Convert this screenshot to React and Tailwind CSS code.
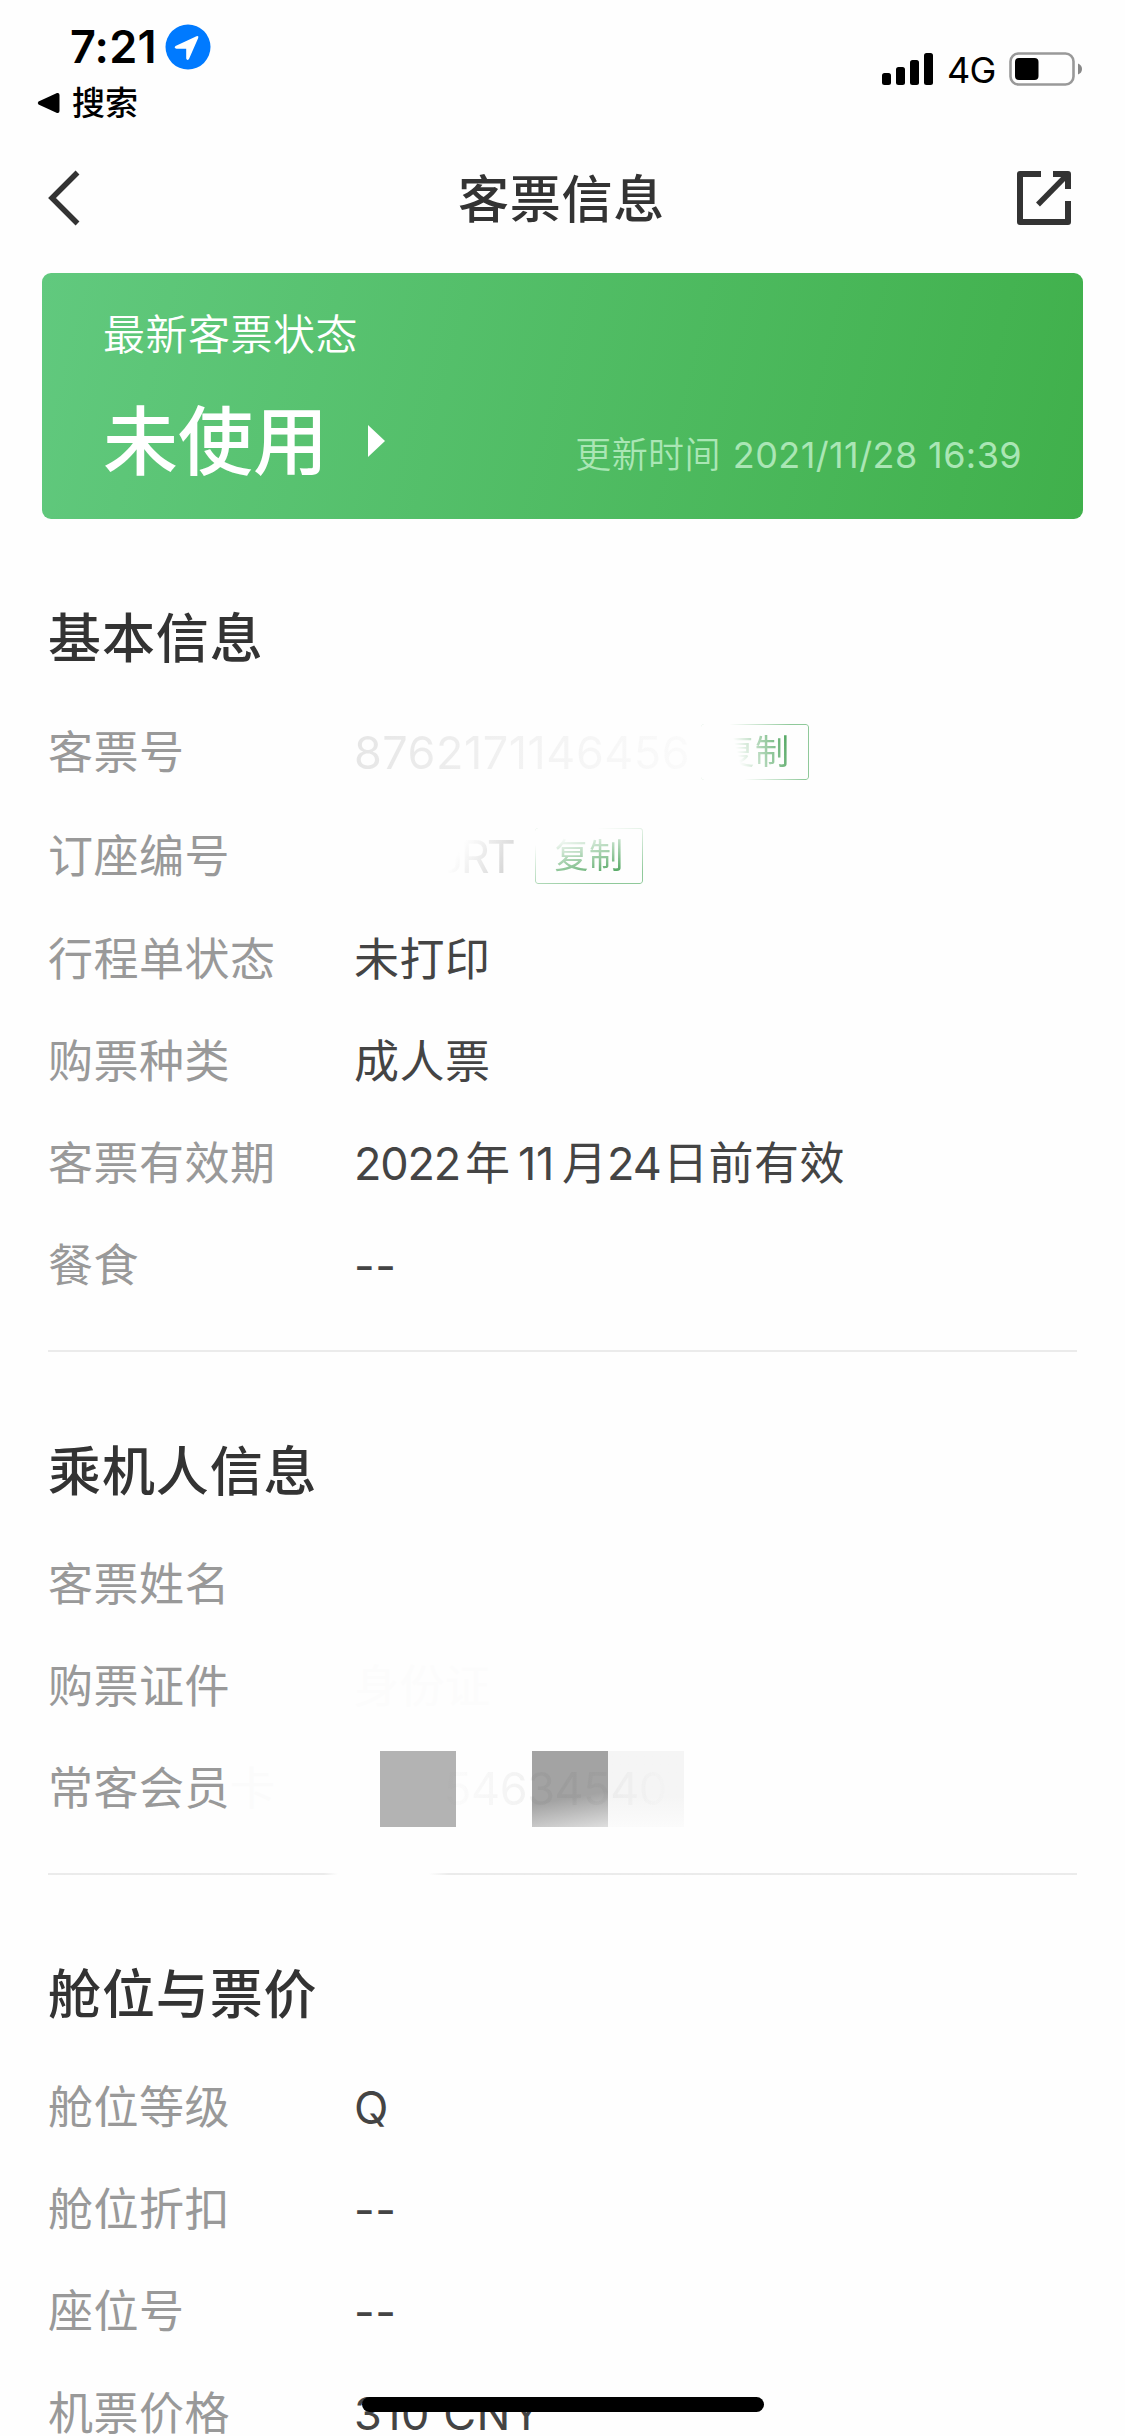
import clsx from "clsx";

const basicRows = [
  { label: "行程单状态", value: "未打印" },
  { label: "购票种类", value: "成人票" },
  { label: "客票有效期", value: <ValidDate /> },
  { label: "餐食", value: "--" },
];

const cabinRows = [
  { label: "舱位等级", value: "Q" },
  { label: "舱位折扣", value: "--" },
  { label: "座位号", value: "--" },
  { label: "机票价格", value: "310 CNY" },
];

function ValidDate() {
  return (
    <span className="flex">
      <span className="w-[111px] tracking-[-1.2px]">2022</span>
      <span className="w-[53px]">年</span>
      <span className="w-[44px] tracking-[-0.4px]">11</span>
      <span className="w-[45px]">月</span>
      <span className="w-[56px] tracking-[-1px]">24</span>
      <span className="tracking-[0.5px]">日前有效</span>
    </span>
  );
}

function StatusBar() {
  return (
    <div className="flex h-[132px] justify-between text-black">
      <div className="pl-[37px] pt-5">
        <div className="flex h-[54px] items-center pl-[33px]">
          <span className="w-[95px] text-[45px] font-semibold leading-[54px] tracking-[0.2px]">
            7:21
          </span>
          <svg viewBox="0 0 46 46" className="h-[46px] w-[46px]">
            <circle cx="23" cy="23" r="22.5" fill="#007aff" />
            <path
              d="M10.500 22 31.500 12.300Q34 11.500 33.200 14L24 35Q22 37 21.200 34.500V24.800H11.500Q8.500 24 10.500 22Z"
              fill="#fff"
            />
          </svg>
        </div>
        <div className="flex h-[57px] items-center">
          <svg viewBox="0 0 23 22" className="h-[22px] w-[23px]">
            <path d="M1.500 9.500 20 1Q22.500 0.500 22.500 3V19Q22.500 21.500 20 21L1.500 12.500Q0 11 1.500 9.500Z" />
          </svg>
          <span className="ml-3 pt-[2px] text-[33px] font-medium leading-none">搜索</span>
        </div>
      </div>
      <div className="flex h-[138px] items-center pr-[42px]">
        <svg viewBox="0 0 51 32" className="h-8 w-[51px]">
          <rect x="0" y="20" width="9" height="12" rx="2.500" />
          <rect x="14" y="14" width="9" height="18" rx="2.500" />
          <rect x="28" y="7" width="9" height="25" rx="2.500" />
          <rect x="42" y="0" width="9" height="32" rx="2.500" />
        </svg>
        <span className="ml-[14px] w-[48px] pt-[2px] text-[36px] leading-none tracking-[-0.8px]">
          4G
        </span>
        <svg viewBox="0 0 74 34" className="ml-[14px] h-[34px] w-[74px]">
          <rect x="1.500" y="1.500" width="63" height="31" rx="8" fill="none" stroke="#999" strokeWidth="2.600" />
          <rect x="6" y="6" width="23.500" height="22" rx="4" />
          <path d="M69 11.500Q73 13 73 17T69 22.500Z" fill="#888" />
        </svg>
      </div>
    </div>
  );
}

function NavBar() {
  return (
    <div className="flex h-[132px] items-center justify-between pl-[47px] pr-[53px] text-[#333]">
      <svg viewBox="0 0 34 56" className="h-14 w-[60px]" preserveAspectRatio="xMinYMid" fill="none">
        <path d="M30.500 2.500 5 28 30.500 53.500" stroke="currentColor" strokeWidth="5.500" />
      </svg>
      <h1 className="pt-1 text-[51px] font-medium tracking-[0.7px]">客票信息</h1>
      <svg viewBox="0 0 56 56" className="h-14 w-14" fill="none" stroke="currentColor" strokeWidth="6">
        <path d="M25 4H4V52H52V31" strokeLinejoin="round" />
        <path d="M37 4H52V19" strokeLinejoin="round" />
        <path d="M51 5 22 34.500" strokeWidth="5.500" />
      </svg>
    </div>
  );
}

function StatusCard() {
  return (
    <div className="mx-[42px] mt-[9px] flex h-[246px] flex-col rounded-[9px] bg-linear-[104deg] from-[#61c97e] to-[#40b04b] px-[61px] text-white">
      <div className="mt-8 text-[42px] font-[350] leading-[60px] tracking-[0.5px]">最新客票状态</div>
      <div className="mt-[23px] flex h-[105px] items-center">
        <span className="pt-[2px] text-[75px] font-medium leading-none">未使用</span>
        <svg viewBox="0 0 17 32" className="ml-10 h-8 w-[17px]" fill="#fff">
          <path d="M0 0 17 16 0 32Z" />
        </svg>
        <span className="ml-auto flex pt-7 text-[36px] font-[350] tracking-[0.4px] text-[#aae6b5]">
          更新时间<span className="ml-3 font-normal">2021/11/28 16:39</span>
        </span>
      </div>
    </div>
  );
}

function Row({ label, className, children }) {
  return (
    <div className={clsx("flex h-[102px] items-center", className)}>
      <span className="w-[306px] shrink-0 text-[#999]">{label}</span>
      {children}
    </div>
  );
}

function Value({ children }) {
  return <span className="text-[#444]">{children}</span>;
}

function Section({ title, className, children }) {
  return (
    <section className={clsx("pl-12 text-[45px] leading-[66px] tracking-[0.5px]", className)}>
      <h2 className="mb-[22px] text-[53px] font-medium leading-[80px] tracking-[0.9px] text-[#333]">
        {title}
      </h2>
      {children}
    </section>
  );
}

function CopyButton({ className }) {
  return (
    <button
      className={clsx(
        "mb-[2px] h-14 w-[108px] rounded-[3px] border-[1.500px] border-[#8fc99a] text-[34px] leading-none text-[#3f9d50]",
        className
      )}
    >
      复制
    </button>
  );
}

export default function App() {
  return (
    <div className="relative h-[2436px] w-[1125px] overflow-hidden bg-[#fefefe] font-['Inter','Noto_Sans_CJK_SC',sans-serif]">
      <StatusBar />
      <NavBar />
      <StatusCard />

      <Section title="基本信息" className="mt-[80px]">
        <Row label="客票号" className="h-[104px]">
          <span className="w-[347px] bg-linear-to-r from-[#e6e6e6] via-[#f3f3f3] to-[#fbfbfb] bg-clip-text text-transparent">
            8762171146456
          </span>
          <CopyButton className="mask-linear-[75deg] mask-linear-from-transparent mask-linear-from-35% mask-linear-to-black mask-linear-to-85%" />
        </Row>
        <Row label="订座编号" className="h-[104px]">
          <span className="w-[181px] bg-linear-[120deg] from-[#fefefe] from-55% to-[#bbb] bg-clip-text pl-[84px] tracking-[-3px] text-transparent">
            JRT
          </span>
          <CopyButton className="mask-linear-[165deg] mask-linear-from-transparent mask-linear-from-20% mask-linear-to-black mask-linear-to-85%" />
        </Row>
        {basicRows.map(({ label, value }) => (
          <Row key={label} label={label}>
            <Value>{value}</Value>
          </Row>
        ))}
        <div className="mr-12 mt-[33px] h-[2px] bg-[#ebebeb]" />
      </Section>

      <Section title="乘机人信息" className="mt-[80px]">
        <Row label="客票姓名" />
        <Row label="购票证件">
          <span className="text-[#fcfcfc]">身份证</span>
        </Row>
        <Row label={<>常客会员<span className="text-[#fbfbfb]">卡</span></>}>
          {/* masked membership number */}
          <div className="relative ml-[26px] flex h-[76px] w-[304px]">
            <span className="w-[76px] bg-[#b3b3b3]" />
            <span className="w-[76px]" />
            <span className="w-[76px] bg-linear-[170deg] from-[#a3a3a3] from-60% to-[#dedede]" />
            <span className="w-[76px] bg-linear-to-b from-[#f5f5f5] from-60% to-[#fbfbfb]" />
            <span className="absolute left-[64px] top-[5px] bg-linear-to-r from-[#66666602] via-[#6666661a] to-[#66666602] bg-clip-text tracking-[-0.4px] text-transparent">
              54634540
            </span>
          </div>
        </Row>
        <div className="mr-12 mt-[33px] flex h-[2px] justify-between">
          <span className="w-[290px] bg-linear-to-r from-[#ebebeb] from-95% to-transparent" />
          <span className="w-[648px] bg-linear-to-l from-[#ebebeb] from-97% to-transparent" />
        </div>
      </Section>

      <Section title="舱位与票价" className="mt-[80px]">
        {cabinRows.map(({ label, value }) => (
          <Row key={label} label={label}>
            <Value>{value}</Value>
          </Row>
        ))}
      </Section>

      {/* home indicator */}
      <div className="absolute bottom-6 left-[362px] h-[15px] w-[402px] rounded-full bg-black" />
    </div>
  );
}
